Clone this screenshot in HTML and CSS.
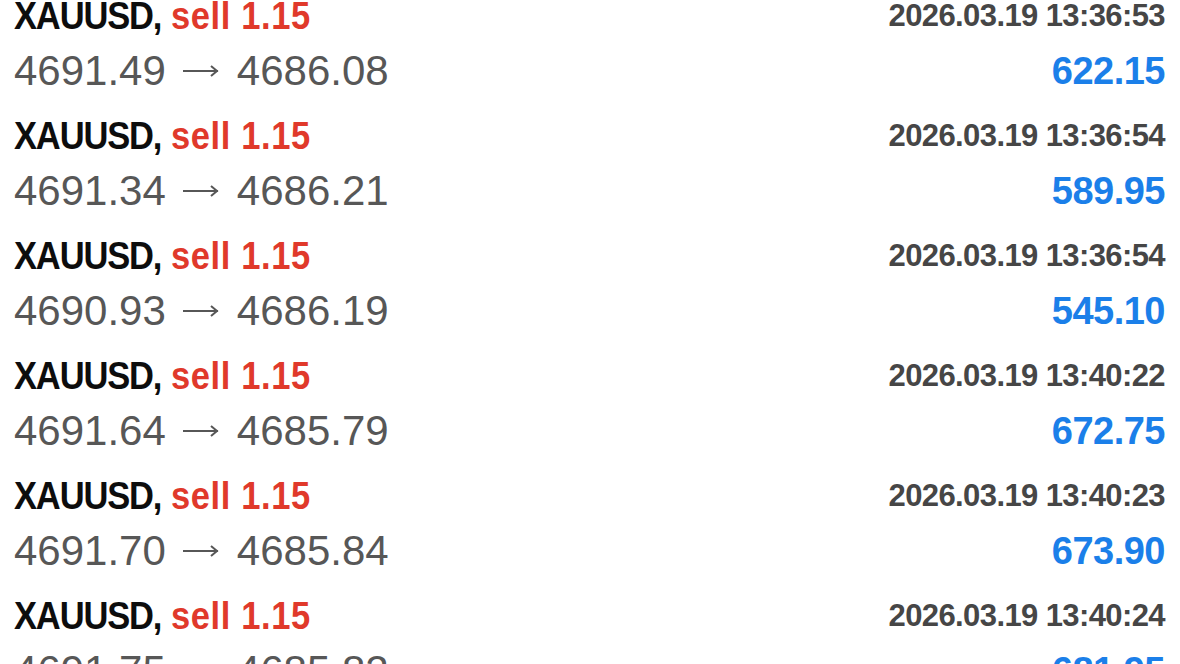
FILE: index.html
```html
<!DOCTYPE html>
<html lang="en">
<head>
    <meta charset="UTF-8">
    <meta name="viewport" content="width=device-width, initial-scale=1.0">
    <title>History</title>
    <link rel="stylesheet" href="styles.css">
</head>
<body>
    <div class="trades">
        <div class="trade">
            <div class="trade-top">
                <span class="symbol"><span class="pair">XAUUSD,</span> <span class="side">sell 1.15</span></span>
                <span class="time">2026.03.19 13:36:53</span>
            </div>
            <div class="trade-bottom">
                <span class="prices">4691.49<svg class="arrow" viewBox="0 0 38 14"><path d="M1 7H36M29 2l6 5-6 5"/></svg>4686.08</span>
                <span class="profit">622.15</span>
            </div>
        </div>
        <div class="trade">
            <div class="trade-top">
                <span class="symbol"><span class="pair">XAUUSD,</span> <span class="side">sell 1.15</span></span>
                <span class="time">2026.03.19 13:36:54</span>
            </div>
            <div class="trade-bottom">
                <span class="prices">4691.34<svg class="arrow" viewBox="0 0 38 14"><path d="M1 7H36M29 2l6 5-6 5"/></svg>4686.21</span>
                <span class="profit">589.95</span>
            </div>
        </div>
        <div class="trade">
            <div class="trade-top">
                <span class="symbol"><span class="pair">XAUUSD,</span> <span class="side">sell 1.15</span></span>
                <span class="time">2026.03.19 13:36:54</span>
            </div>
            <div class="trade-bottom">
                <span class="prices">4690.93<svg class="arrow" viewBox="0 0 38 14"><path d="M1 7H36M29 2l6 5-6 5"/></svg>4686.19</span>
                <span class="profit">545.10</span>
            </div>
        </div>
        <div class="trade">
            <div class="trade-top">
                <span class="symbol"><span class="pair">XAUUSD,</span> <span class="side">sell 1.15</span></span>
                <span class="time">2026.03.19 13:40:22</span>
            </div>
            <div class="trade-bottom">
                <span class="prices">4691.64<svg class="arrow" viewBox="0 0 38 14"><path d="M1 7H36M29 2l6 5-6 5"/></svg>4685.79</span>
                <span class="profit">672.75</span>
            </div>
        </div>
        <div class="trade">
            <div class="trade-top">
                <span class="symbol"><span class="pair">XAUUSD,</span> <span class="side">sell 1.15</span></span>
                <span class="time">2026.03.19 13:40:23</span>
            </div>
            <div class="trade-bottom">
                <span class="prices">4691.70<svg class="arrow" viewBox="0 0 38 14"><path d="M1 7H36M29 2l6 5-6 5"/></svg>4685.84</span>
                <span class="profit">673.90</span>
            </div>
        </div>
        <div class="trade">
            <div class="trade-top">
                <span class="symbol"><span class="pair">XAUUSD,</span> <span class="side">sell 1.15</span></span>
                <span class="time">2026.03.19 13:40:24</span>
            </div>
            <div class="trade-bottom">
                <span class="prices">4691.75<svg class="arrow" viewBox="0 0 38 14"><path d="M1 7H36M29 2l6 5-6 5"/></svg>4685.82</span>
                <span class="profit">681.95</span>
            </div>
        </div>
    </div>
</body>
</html>
```
FILE: styles.css
```css
body {
    margin: 0;
    padding: 0;
    background-color: #fff;
    font-family: "Liberation Sans", Arial, sans-serif;
    overflow: hidden;
}
.trades {
    display: flex;
    flex-direction: column;
}
.trade {
    padding: 0 15px 10px 14px;
}
.trade-top, .trade-bottom {
    display: flex;
    justify-content: space-between;
    align-items: center;
}
.trade-top {
    height: 32px;
}
.trade-bottom {
    height: 78px;
}
/* condensed bold look of the app font */
.symbol {
    display: inline-block;
    font-weight: bold;
    font-size: 39px;
    color: #0d0d0d;
    white-space: pre;
    transform: scaleX(0.885);
    transform-origin: left center;
}
.pair {
    letter-spacing: -1.3px;
}
.side {
    color: #e0392b;
    letter-spacing: 0.7px;
}
.time {
    font-weight: bold;
    font-size: 31px;
    color: #464646;
    letter-spacing: -0.6px;
}
.prices {
    display: flex;
    align-items: center;
    font-size: 42px;
    color: #575757;
}
.arrow {
    width: 38px;
    height: 14px;
    margin: 0 17px 0 16px;
    fill: none;
    stroke: #575757;
    stroke-width: 2;
}
.profit {
    font-weight: bold;
    font-size: 38px;
    color: #1b7fe9;
    letter-spacing: -0.5px;
}
```
